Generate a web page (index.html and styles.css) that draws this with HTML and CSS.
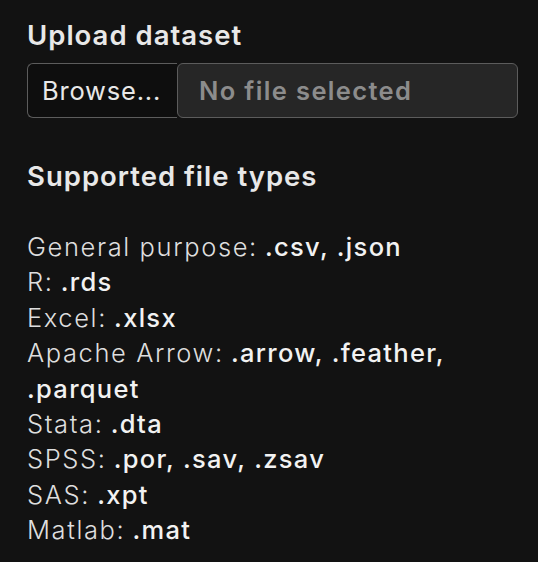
FILE: index.html
```html
<!DOCTYPE html>
<html lang="en">
<head>
<meta charset="utf-8">
<title>Upload dataset</title>
<link rel="stylesheet" href="styles.css">
</head>
<body>
<main class="panel">
  <h2 class="title">Upload dataset</h2>
  <div class="file-input">
    <span class="browse">Browse...</span>
    <span class="filename">No file selected</span>
  </div>
  <h2 class="title title-types">Supported file types</h2>
  <ul class="types">
    <li><span class="label">General purpose:</span> <span class="ext">.csv, .json</span></li>
    <li><span class="label">R:</span> <span class="ext">.rds</span></li>
    <li><span class="label">Excel:</span> <span class="ext">.xlsx</span></li>
    <li><span class="label">Apache Arrow:</span> <span class="ext">.arrow, .feather, .parquet</span></li>
    <li><span class="label">Stata:</span> <span class="ext">.dta</span></li>
    <li><span class="label">SPSS:</span> <span class="ext">.por, .sav, .zsav</span></li>
    <li><span class="label">SAS:</span> <span class="ext">.xpt</span></li>
    <li><span class="label">Matlab:</span> <span class="ext">.mat</span></li>
  </ul>
</main>
</body>
</html>
```
FILE: styles.css
```css
html, body {
  margin: 0;
  padding: 0;
  background: #121212;
}
body {
  font-family: Inter, "Noto Sans", sans-serif;
  color: #e6e6e6;
}
.panel {
  padding: 18px 20px 0 27px;
  width: 491px;
}
.title {
  margin: 0;
  font-size: 27.5px;
  line-height: 34px;
  font-weight: 600;
  letter-spacing: 1px;
  color: #e8e8e8;
}
.file-input {
  margin-top: 11px;
  display: flex;
  height: 55px;
}
.browse {
  box-sizing: border-box;
  width: 150px;
  display: flex;
  align-items: center;
  padding-left: 14px;
  background: #0e0e0e;
  border: 1px solid #5c5c5c;
  border-right: none;
  border-radius: 6px 0 0 6px;
  font-size: 25.5px;
  font-weight: 400;
  letter-spacing: 0.8px;
  color: #e8e8e8;
}
.filename {
  box-sizing: border-box;
  flex: 1;
  display: flex;
  align-items: center;
  padding-left: 21px;
  background: #262626;
  border: 1px solid #5c5c5c;
  border-radius: 6px;
  font-size: 25.5px;
  font-weight: 600;
  letter-spacing: 1.35px;
  color: #8c8c8c;
}
.title-types {
  margin-top: 41px;
}
.types {
  list-style: none;
  margin: 36px 0 0;
  padding: 0;
  max-width: 470px;
  font-size: 25.5px;
  line-height: 35.4px;
}
.label {
  font-family: "Inter Light", Inter, "Noto Sans", sans-serif;
  font-weight: 200;
  letter-spacing: 1.6px;
  color: #dedede;
}
.ext {
  font-weight: 500;
  letter-spacing: 1.3px;
  color: #f2f2f2;
}
```
